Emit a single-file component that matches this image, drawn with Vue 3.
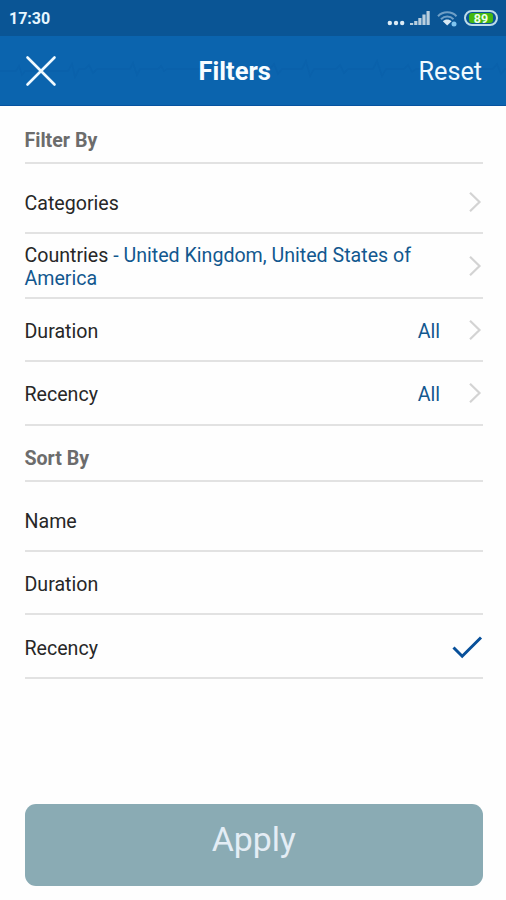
<script setup>
import { ref } from 'vue'

const filters = [
  { id: 'categories', name: 'Categories' },
  { id: 'countries', name: 'Countries', detail: 'United Kingdom, United States of America' },
  { id: 'duration', name: 'Duration', value: 'All' },
  { id: 'recency', name: 'Recency', value: 'All' },
]
const sorts = ['Name', 'Duration', 'Recency']
const selected = ref('Recency')
</script>

<template>
  <main class="screen">
    <div class="status">
      <span class="time">17:30</span>
      <svg class="dots" width="18" height="6" viewBox="0 0 18 6">
        <circle cx="2.8" cy="3" r="2.2" /><circle cx="9" cy="3" r="2.2" /><circle cx="15.2" cy="3" r="2.2" />
      </svg>
      <svg class="signal" width="20" height="16" viewBox="0 0 20 16">
        <path d="M0 13h3.200v2H0zM4.200 11h3.200v4H4.200zM8.300 8h3.200v7H8.300zM12.400 4.500h3.200V15h-3.200zM16.500 1h3.200v14h-3.200z" />
      </svg>
      <svg class="wifi" width="21" height="17" viewBox="0 0 21 17">
        <path class="faint" d="M1 6.200C6 1 14.500 1 19.500 6.200M4 9.200c3.500-3.500 9-3.500 12.500 0" />
        <path class="strong" d="M5.800 11.200c2.500-2.200 6.300-2.200 8.800 0l-4.400 4.300z" />
        <circle cx="17" cy="14" r="2.500" />
      </svg>
      <span class="battery"><span class="charge">89</span></span>
    </div>

    <header class="bar">
      <svg class="wave" width="506" height="24" viewBox="0 0 506 24">
        <path d="M0 12h16l3-5 3 9 3-4h43l4-7 3 13 4-8h6l4-4 4 8 4-4h33l3-6 4 12 3-6h18l3-3 3 5 3-2h103l4-5 4 10 4-5h20l4-8 4 15 4-7h22l4-4 4 8 4-4h25l4-8 5 15 4-7h18l4-4 4 7 4-3h77l4-5 4 10 4-5h9" />
      </svg>
      <button class="close" aria-label="Close">
        <svg width="32" height="32" viewBox="0 0 32 32"><path d="M2.500 2.500l27 27M29.500 2.500l-27 27" /></svg>
      </button>
      <h1>Filters</h1>
      <button class="reset">Reset</button>
    </header>

    <div class="content">
      <section>
        <h2 class="first">Filter By</h2>
        <ul>
          <li v-for="f in filters" :key="f.id" :class="f.id">
            <span class="label">{{ f.name }}<span v-if="f.detail" class="blue"> - {{ f.detail }}</span></span>
            <span v-if="f.value" class="blue value">{{ f.value }}</span>
            <svg class="chevron" width="14" height="22" viewBox="0 0 14 22"><path d="M2 1.800l9.500 9.200L2 20.200" /></svg>
          </li>
        </ul>
      </section>
      <section>
        <h2>Sort By</h2>
        <ul>
          <li v-for="s in sorts" :key="s" @click="selected = s">
            <span class="label">{{ s }}</span>
            <svg v-if="s === selected" class="check" width="32" height="24" viewBox="0 0 32 24"><path d="M2.500 12.500l8.700 8.700L30 2.500" /></svg>
          </li>
        </ul>
      </section>
    </div>

    <button class="apply">Apply</button>
  </main>
</template>

<style>
body { margin: 0; background: #fefefe; }
</style>

<style scoped>
* { box-sizing: border-box; }
.screen {
  display: flex;
  flex-direction: column;
  width: 506px;
  height: 900px;
  overflow: hidden;
  background: #fefefe;
  font-family: Roboto, "Liberation Sans", sans-serif;
}
button { margin: 0; padding: 0; border: 0; background: none; font-family: inherit; }
svg { display: block; flex: none; }
path { fill: none; }

.status {
  display: flex;
  flex: none;
  align-items: center;
  height: 36px;
  padding: 1px 8px 0 9px;
  background: #0a5595;
  color: #e6f6ff;
}
.time { flex: 1; font-size: 16px; font-weight: 700; line-height: 20px; }
.dots { margin: 8px 5px 0 0; fill: #dcebf5; }
.signal { margin: 0 7px 2px 0; }
.signal path { fill: #b9cfdf; }
.wifi { margin: 0 6px 0 0; }
.wifi .faint { stroke: #6f9fc6; stroke-width: 2; }
.wifi .strong { fill: #d8e9f4; }
.wifi circle { fill: #7fc4ef; }
.battery {
  width: 34px;
  height: 16px;
  margin-bottom: 2px;
  padding: 1px 3px;
  border: 2px solid #bddbe9;
  border-radius: 8px;
}
.charge {
  display: block;
  height: 10px;
  border-radius: 3px;
  background: #43b80f;
  color: #efffe9;
  font-size: 12.500px;
  font-weight: 700;
  line-height: 11px;
  text-align: center;
}

.bar {
  position: relative;
  display: flex;
  flex: none;
  align-items: center;
  height: 70px;
  padding: 0 24px 0 25px;
  border-bottom: 1px solid #0653a0;
  background: #0b64ae;
  color: #f8fdff;
}
.wave { position: absolute; top: 23px; left: 0; }
.wave path { stroke: #095ba5; stroke-width: 1.500; opacity: .35; }
.close, h1, .reset { position: relative; }
.close path { stroke: #f0faff; stroke-width: 2.600; stroke-linecap: round; }
h1 { flex: 1; margin: 1px 0 0; padding-right: 6px; font-size: 25.500px; font-weight: 700; line-height: 30px; text-align: center; }
.reset { margin-top: 3px; color: #f0faff; font-size: 25.200px; line-height: 30px; }

.content { flex: 1; padding: 0 23px 0 24.500px; }
h2 {
  height: 56px;
  margin: 0;
  padding-top: 21px;
  border-bottom: 2px solid #e2e2e2;
  color: #6c6c6c;
  font-size: 19.600px;
  font-weight: 700;
  line-height: 24px;
}
h2.first { height: 58px; padding-top: 22.500px; }
ul { margin: 0; padding: 7px 0 0; list-style: none; }
li {
  display: flex;
  align-items: center;
  height: 63.400px;
  border-bottom: 2px solid #e2e2e2;
  color: #272727;
  font-size: 19.600px;
  line-height: 23px;
}
li.countries { height: 64.500px; }
.label { flex: 1; padding: 4px 40px 0 0; }
.countries .label { padding-top: 2px; }
.blue { color: #12588f; }
.value { margin-right: 28px; padding-top: 3px; }
.chevron { margin: 1px 1px 0 0; }
.countries .chevron { margin-top: 0; }
.chevron path { stroke: #d3d3d3; stroke-width: 2.200; }
.check { margin-top: 1px; }
.check path { stroke: #08509a; stroke-width: 3; }

.apply {
  height: 82.500px;
  margin: 0 23px 14px 24.500px;
  padding-bottom: 9px;
  border-radius: 11px;
  background: #8aabb4;
  color: #e4edf5;
  font-size: 33.800px;
  line-height: 42px;
}
</style>
